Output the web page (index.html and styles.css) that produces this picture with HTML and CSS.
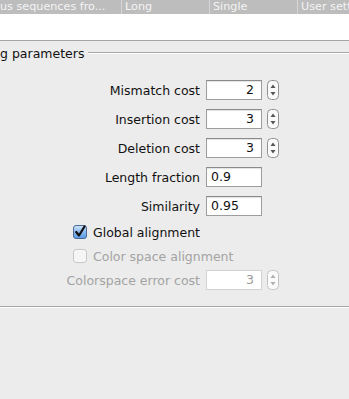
FILE: index.html
```html
<!DOCTYPE html>
<html lang="en">
<head>
    <meta charset="UTF-8">
    <title>Matching parameters</title>
    <link rel="stylesheet" href="styles.css">
</head>
<body>
    <div class="table-area">
        <div class="table-head">
            <div class="col col-first">us sequences fro...</div>
            <div class="col">Long</div>
            <div class="col">Single</div>
            <div class="col col-last">User sett</div>
        </div>
        <div class="table-body"></div>
    </div>

    <div class="panel">
        <div class="group">
            <div class="legend">
                <span class="legend-text">g parameters</span>
                <span class="legend-line"></span>
            </div>

            <div class="rows">
                <div class="row">
                    <label class="lbl">Mismatch cost</label>
                    <div class="field num">2</div>
                    <svg class="spin" width="12" height="20" viewBox="0 0 12 20">
                        <rect x="0.5" y="0.5" width="11" height="19" rx="4" class="spin-box"/>
                        <path d="M3.5 8 L6 4.5 L8.5 8 Z" class="spin-arrow"/>
                        <path d="M3.5 12 L6 15.5 L8.5 12 Z" class="spin-arrow"/>
                    </svg>
                </div>
                <div class="row">
                    <label class="lbl">Insertion cost</label>
                    <div class="field num">3</div>
                    <svg class="spin" width="12" height="20" viewBox="0 0 12 20">
                        <rect x="0.5" y="0.5" width="11" height="19" rx="4" class="spin-box"/>
                        <path d="M3.5 8 L6 4.5 L8.5 8 Z" class="spin-arrow"/>
                        <path d="M3.5 12 L6 15.5 L8.5 12 Z" class="spin-arrow"/>
                    </svg>
                </div>
                <div class="row">
                    <label class="lbl">Deletion cost</label>
                    <div class="field num">3</div>
                    <svg class="spin" width="12" height="20" viewBox="0 0 12 20">
                        <rect x="0.5" y="0.5" width="11" height="19" rx="4" class="spin-box"/>
                        <path d="M3.5 8 L6 4.5 L8.5 8 Z" class="spin-arrow"/>
                        <path d="M3.5 12 L6 15.5 L8.5 12 Z" class="spin-arrow"/>
                    </svg>
                </div>
                <div class="row">
                    <label class="lbl">Length fraction</label>
                    <div class="field">0.9</div>
                </div>
                <div class="row">
                    <label class="lbl">Similarity</label>
                    <div class="field">0.95</div>
                </div>

                <div class="check-row first-check">
                    <svg class="box" width="14" height="14" viewBox="0 0 14 14">
                        <defs>
                            <linearGradient id="blue" x1="0" y1="0" x2="0" y2="1">
                                <stop offset="0" stop-color="#d4e6fb"/>
                                <stop offset="0.5" stop-color="#8ab8ec"/>
                                <stop offset="1" stop-color="#5d9be3"/>
                            </linearGradient>
                        </defs>
                        <rect x="0.5" y="0.5" width="13" height="13" rx="2.5" fill="url(#blue)" stroke="#4a6a9a"/>
                        <path d="M3.2 7 L6 10.5 L11.5 1.5" fill="none" stroke="#111" stroke-width="2.2" stroke-linecap="round" stroke-linejoin="round"/>
                    </svg>
                    <span>Global alignment</span>
                </div>
                <div class="check-row disabled">
                    <svg class="box" width="14" height="14" viewBox="0 0 14 14">
                        <rect x="0.5" y="0.5" width="13" height="13" rx="2.5" fill="#f6f6f6" stroke="#c8c8c8"/>
                    </svg>
                    <span>Color space alignment</span>
                </div>

                <div class="row disabled last-row">
                    <label class="lbl">Colorspace error cost</label>
                    <div class="field num">3</div>
                    <svg class="spin" width="12" height="20" viewBox="0 0 12 20">
                        <rect x="0.5" y="0.5" width="11" height="19" rx="4" class="spin-box"/>
                        <path d="M3.5 8 L6 4.5 L8.5 8 Z" class="spin-arrow"/>
                        <path d="M3.5 12 L6 15.5 L8.5 12 Z" class="spin-arrow"/>
                    </svg>
                </div>
            </div>
        </div>
    </div>
</body>
</html>
```

FILE: styles.css
```css
body {
    margin: 0;
    padding: 0;
    width: 349px;
    height: 399px;
    overflow: hidden;
    background: #ececec;
    font-family: "Lucida Grande", "DejaVu Sans", sans-serif;
    font-size: 12.5px;
    color: #111;
}
.table-area {
    background: #fff;
    height: 40px;
    border-bottom: 1px solid #a5a5a5;
}
.table-head {
    display: flex;
    height: 14px;
    background: #bdbdbd;
    color: #f4f4f4;
    font-size: 11.2px;
    line-height: 14px;
    overflow: hidden;
}
.col {
    flex-shrink: 0;
    width: 88px;
    padding-left: 3px;
    border-left: 1px solid #d6d6d6;
    box-sizing: border-box;
    white-space: nowrap;
    overflow: hidden;
}
.col-first {
    width: 121px;
    padding-left: 0;
    border-left: none;
}
.col-last {
    flex: 1;
    min-width: 0;
}
.panel {
    padding-top: 11px;
}
.group {
    border-bottom: 1px solid #a8a8a8;
    box-shadow: 0 1px 0 #fff;
    padding-bottom: 16px;
}
.legend {
    display: flex;
    align-items: center;
    height: 1px;
}
.legend-text {
    white-space: nowrap;
    line-height: 14px;
    margin-top: 2px;
}
.legend-line {
    flex: 1;
    height: 1px;
    background: #a8a8a8;
    margin-left: 4px;
    box-shadow: 0 1px 0 #fff;
}
.rows {
    padding-top: 27px;
    display: flex;
    flex-direction: column;
}
.row {
    display: flex;
    align-items: center;
    height: 20px;
    margin-bottom: 9px;
}
.lbl {
    width: 200px;
    text-align: right;
    white-space: nowrap;
}
.field {
    width: 56px;
    height: 20px;
    margin-left: 6px;
    box-sizing: border-box;
    background: #fff;
    border: 1px solid #9d9d9d;
    border-top-color: #8a8a8a;
    box-shadow: inset 0 1px 1px rgba(0, 0, 0, 0.12);
    padding: 0 4px;
    line-height: 18px;
}
.field.num {
    text-align: right;
    padding-right: 7px;
}
.spin {
    margin-left: 5px;
    display: block;
}
.spin-box {
    fill: #fafafa;
    stroke: #909090;
}
.spin-arrow {
    fill: #555;
}
.check-row {
    display: flex;
    align-items: center;
    height: 20px;
    padding-left: 73px;
    margin-bottom: 4px;
}
.first-check {
    margin-top: -3px;
}
.check-row span {
    margin-left: 6px;
}
.box {
    display: block;
}
.disabled {
    color: #a3a3a3;
}
.disabled .field {
    border-color: #d2d2d2;
    box-shadow: none;
    color: #9a9a9a;
}
.disabled .spin-box {
    stroke: #c4c4c4;
}
.disabled .spin-arrow {
    fill: #b0b0b0;
}
.last-row {
    margin-bottom: 0;
}
```
